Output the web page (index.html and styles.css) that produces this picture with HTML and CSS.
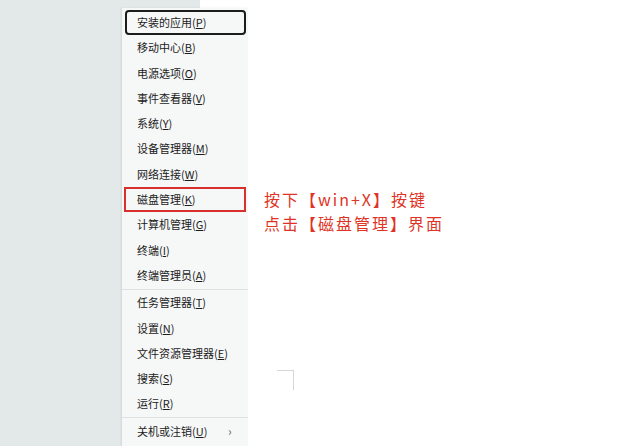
FILE: index.html
```html
<!DOCTYPE html>
<html lang="zh-CN">
<head>
<meta charset="utf-8">
<link rel="stylesheet" href="styles.css">
</head>
<body>
<div class="page">
  <div class="sidebar"></div>
  <div class="menu">
    <div class="item focused">安装的应用(<u>P</u>)</div>
    <div class="item">移动中心(<u>B</u>)</div>
    <div class="item">电源选项(<u>O</u>)</div>
    <div class="item">事件查看器(<u>V</u>)</div>
    <div class="item">系统(<u>Y</u>)</div>
    <div class="item">设备管理器(<u>M</u>)</div>
    <div class="item">网络连接(<u>W</u>)</div>
    <div class="item marked">磁盘管理(<u>K</u>)</div>
    <div class="item">计算机管理(<u>G</u>)</div>
    <div class="item">终端(<u>I</u>)</div>
    <div class="item">终端管理员(<u>A</u>)</div>
    <div class="sep"></div>
    <div class="item">任务管理器(<u>T</u>)</div>
    <div class="item">设置(<u>N</u>)</div>
    <div class="item">文件资源管理器(<u>E</u>)</div>
    <div class="item">搜索(<u>S</u>)</div>
    <div class="item">运行(<u>R</u>)</div>
    <div class="sep"></div>
    <div class="item sub">关机或注销(<u>U</u>)<span class="chev">›</span></div>
  </div>
  <div class="note">
    <div>按下【win+X】按键</div>
    <div>点击【磁盘管理】界面</div>
  </div>
  <div class="corner"></div>
</div>
</body>
</html>
```
FILE: styles.css
```css
html, body {
  margin: 0;
  padding: 0;
  background: #ffffff;
}
.page {
  position: relative;
  width: 640px;
  height: 446px;
  overflow: hidden;
  background: #ffffff;
  display: flex;
}
.sidebar {
  width: 200px;
  height: 100%;
  background: #e3e8e9;
}
.menu {
  position: absolute;
  left: 122px;
  top: 8px;
  bottom: 0;
  width: 126px;
  background: #f6f7f7;
  box-shadow: -1px 0 2px rgba(0, 0, 0, 0.08);
  padding-top: 2px;
  box-sizing: border-box;
  font-family: "Noto Sans CJK SC", "Noto Sans", sans-serif;
  font-size: 11px;
  color: #1b1b1b;
}
.item {
  position: relative;
  height: 25.3px;
  line-height: 25px;
  padding-left: 15px;
  box-sizing: border-box;
  white-space: nowrap;
}
.item u {
  text-decoration: underline;
  text-underline-offset: 1px;
}
.focused {
  margin: 0 2px 0 3px;
  padding-left: 10px;
  border: 2px solid #1c1c1c;
  border-radius: 4px;
  line-height: 21px;
}
.marked {
  margin: 0 2px 0 2px;
  padding-left: 11px;
  border: 2px solid #d8302a;
  line-height: 21px;
}
.sep {
  height: 1px;
  margin: 0.5px 0;
  background: #e0e3e3;
}
.chev {
  position: absolute;
  left: 106px;
  top: -1px;
  color: #666666;
  font-size: 12px;
}
.note {
  position: absolute;
  left: 264px;
  top: 187px;
  font-family: "Noto Sans CJK SC", "Noto Sans", sans-serif;
  font-size: 16px;
  letter-spacing: 2px;
  line-height: 24px;
  color: #e03325;
}
.corner {
  position: absolute;
  left: 277px;
  top: 370px;
  width: 16px;
  height: 19px;
  border-top: 1px solid #d6d6d6;
  border-right: 1px solid #d6d6d6;
}
```
